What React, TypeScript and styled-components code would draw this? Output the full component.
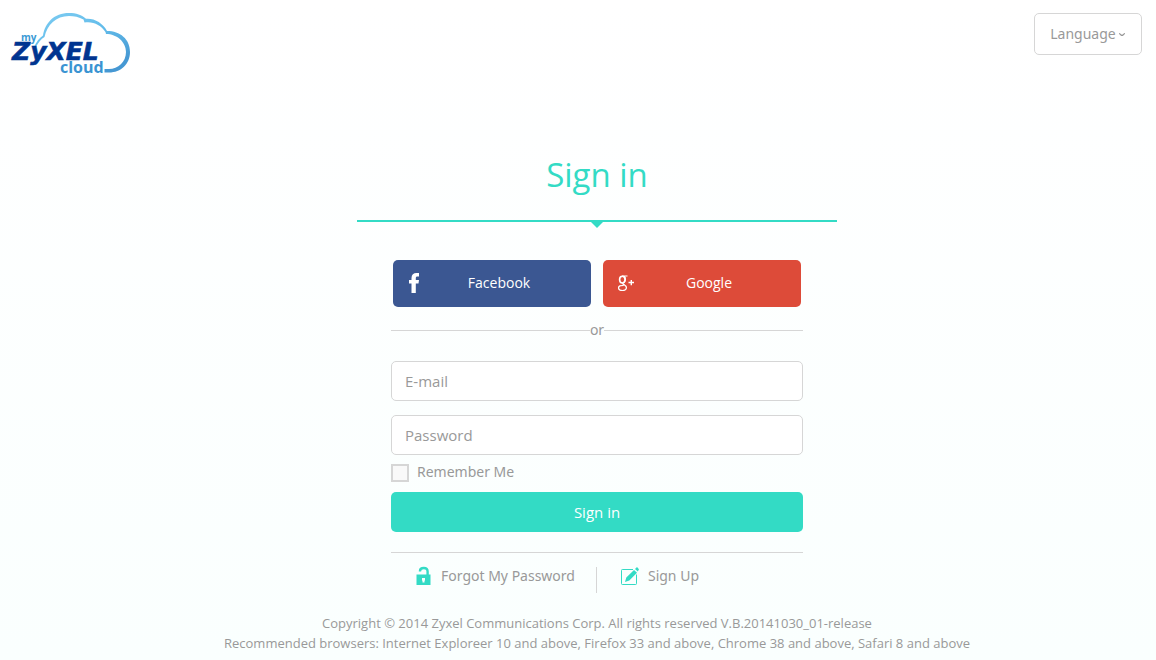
import React from 'react';
import styled, { createGlobalStyle } from 'styled-components';

const teal = '#33dbc5';
const grey = '#999';
const line = '#d6d6d6';

const GlobalStyle = createGlobalStyle`
  *, *::before, *::after { box-sizing: border-box; }
  html { min-height: 100%; background: linear-gradient(#fff, #fafffe); }
  body {
    margin: 0;
    color: ${grey};
    font-family: "Noto Sans", "Open Sans", sans-serif;
    font-size: 14px;
    line-height: 20px;
  }
  button, input { font: inherit; }
`;

const Header = styled.header`
  display: flex;
  justify-content: space-between;
  align-items: flex-start;
  padding: 12px 14px 0 10px;
`;

const HomeLink = styled.a`
  display: block;
  svg { display: block; }
`;

const LanguageButton = styled.button`
  display: flex;
  align-items: center;
  justify-content: center;
  gap: 2px;
  width: 108px;
  height: 42px;
  margin-top: 1px;
  padding: 0;
  color: ${grey};
  background: #fff;
  border: 1px solid ${line};
  border-radius: 5px;
  cursor: pointer;
`;

const Content = styled.div`
  display: flex;
  flex-direction: column;
  align-items: center;
  padding-left: 38px;
`;

const Panel = styled.main`
  display: flex;
  flex-direction: column;
  align-items: center;
  width: 100%;
  max-width: 480px;
  padding-top: 71px;
`;

const Title = styled.h1`
  width: 100%;
  margin: 0;
  padding-bottom: 21px;
  border-bottom: 2px solid ${teal};
  color: ${teal};
  font-family: "Open Sans", sans-serif;
  font-size: 33px;
  font-weight: 400;
  line-height: 48px;
  text-align: center;
`;

const Pointer = styled.div`
  border: 6px solid transparent;
  border-top-color: ${teal};
  border-bottom: 0;
`;

const Form = styled.form`
  display: flex;
  flex-direction: column;
  width: 100%;
  max-width: 412px;
  padding-top: 32px;
`;

const SocialRow = styled.div`
  display: flex;
  gap: 12px;
  padding: 0 2px;
`;

const SocialButton = styled.button<{ $color: string }>`
  display: flex;
  align-items: center;
  flex: 1;
  height: 47px;
  padding: 0 12px 1px;
  color: #fff;
  background: ${(p) => p.$color};
  border: 0;
  border-radius: 5px;
  font-family: "Open Sans", sans-serif;
  cursor: pointer;
`;

const SocialLabel = styled.span`
  flex: 1;
  padding-right: 6px;
  text-align: center;
`;

const Divider = styled.div`
  display: flex;
  align-items: center;
  height: 20px;
  margin: 13px 0 21px;
  &::before, &::after {
    content: '';
    flex: 1;
    height: 1px;
    background: ${line};
  }
`;

const Field = styled.input`
  width: 100%;
  height: 40px;
  margin-bottom: 14px;
  padding: 0 13px;
  color: #666;
  background: #fff;
  border: 1px solid ${line};
  border-radius: 5px;
  font-family: "Open Sans", sans-serif;
  font-size: 15px;
  &::placeholder { color: ${grey}; opacity: 1; }
`;

const Remember = styled.label`
  display: flex;
  align-items: center;
  gap: 8px;
  height: 20px;
  margin: -7px 0 10px;
`;

const CheckBox = styled.input`
  appearance: none;
  width: 18px;
  height: 18px;
  margin: 2px 0 0;
  background: #f9f9f9;
  border: 2px solid ${line};
  &:checked { background: ${teal}; }
`;

const SubmitButton = styled.button`
  height: 40px;
  padding: 0;
  color: #fff;
  background: ${teal};
  border: 0;
  border-radius: 5px;
  font-family: "Open Sans", sans-serif;
  font-size: 15px;
  cursor: pointer;
`;

const Links = styled.nav`
  display: flex;
  align-items: flex-start;
  margin-top: 20px;
  padding: 13px 0 0 24px;
  border-top: 1px solid ${line};
`;

const IconLink = styled.a`
  display: flex;
  align-items: center;
  gap: 9px;
  color: ${grey};
  text-decoration: none;
`;

const Separator = styled.span`
  width: 1px;
  height: 26px;
  margin: 1px 24px 0 21px;
  background: ${line};
`;

const Footer = styled.footer`
  padding: 20px 0 7px;
  font-family: "Open Sans", sans-serif;
  font-size: 13px;
  text-align: center;
  p { margin: 0; }
`;

const Logo = () => (
  <svg width="122" height="68" viewBox="10 12 122 68" role="img" aria-label="myZyXEL cloud">
    <defs>
      <linearGradient id="cloud" x1="0" y1="0" x2="0.6" y2="1">
        <stop offset="0" stopColor="#7fcdf2" />
        <stop offset="0.5" stopColor="#62bcea" />
        <stop offset="1" stopColor="#4598d3" />
      </linearGradient>
    </defs>
    <path
      d="M34 47C36.500 42 39 38 43 35.500C45 23 54 13 69 13C76 13 82 15 86 18.800C94 18 103 23 107 31C120 31 130 39 130 52C130 64 121 72.500 109 72.500L104.500 72.500L104.500 69L109 69C118 69 126 62 126 52C126 42 117 34 106 34L105.500 32C101 25 93 21 84.500 22.500L83.500 19.500C79 17 74 16 69 16C56 16 47 25 44.500 37C41 39 38 43 36 47Z"
      fill="url(#cloud)"
    />
    <text x="21" y="41" fontFamily='"Open Sans", sans-serif' fontWeight="700" fontSize="10" fill="#3a9ad5">my</text>
    <text
      x="12"
      y="60"
      fontFamily='"DejaVu Sans", sans-serif'
      fontWeight="700"
      fontStyle="italic"
      fontSize="25"
      fill="#003590"
      stroke="#003590"
      strokeWidth="0.6"
    >
      ZyXEL
    </text>
    <text x="60" y="73" fontFamily='"Open Sans", sans-serif' fontWeight="700" fontSize="16" fill="#3a94d2">cloud</text>
  </svg>
);

const Chevron = () => (
  <svg width="8" height="6" viewBox="0 0 8 6" fill="none" stroke="#999" strokeWidth="1.200" aria-hidden="true">
    <path d="M1 2.500C2 2.500 3 4.500 4 4.500C5 4.500 6 2.500 7 2.500" />
  </svg>
);

const FacebookIcon = () => (
  <svg width="20" height="22" viewBox="0 0 20 22" fill="#fff" aria-hidden="true">
    <path d="M6.500 21V11.500H4V8H6.500V6C6.500 2.600 8.500 1 11.500 1H14V4.500H12.500C11.200 4.500 10.800 5 10.800 6.200V8H14L13.500 11.500H10.800V21Z" />
  </svg>
);

const GoogleIcon = () => (
  <svg width="20" height="20" viewBox="0 0 20 20" fill="none" stroke="#fff" aria-hidden="true">
    <ellipse cx="7.300" cy="6.600" rx="2.700" ry="3.400" strokeWidth="1.600" />
    <path
      d="M7 3H12.500M9.300 3.400C10.800 5 11 8 8.700 9.500C6.500 10.900 8.300 11.200 9.800 12.200C12.600 14 11.700 17.500 7.500 17.500C2.500 17.500 2.700 13.400 5.600 12.700C6.500 12.400 7.500 12.300 8.600 12.300"
      strokeWidth="1.200"
    />
    <path d="M13.500 9.500H19M16.300 7V12.200" strokeWidth="1.400" />
  </svg>
);

const LockIcon = () => (
  <svg width="17" height="20" viewBox="0 0 17 20" aria-hidden="true">
    <path d="M5 5.500V5C5 2.800 6.700 2 8.800 2C11 2 12.600 3 12.600 5.500V9" fill="none" stroke={teal} strokeWidth="2.400" />
    <path fillRule="evenodd" fill={teal} d="M1.500 8.500H15.500V19H1.500ZM7 12V14.500L7.500 14.800V16.500H9.500V14.800L10 14.500V12Z" />
  </svg>
);

const SignUpIcon = () => (
  <svg width="18" height="20" viewBox="0 0 18 20" aria-hidden="true">
    <path d="M12 3.500H1.300C.8 3.500 .5 3.800 .5 4.300V17.700C.5 18.200 .8 18.500 1.300 18.500H14.700C15.200 18.500 15.500 18.200 15.500 17.700V8.500" fill="none" stroke={teal} />
    <path d="M4 16L5.300 11.600L13 4L16 6.700L8.300 14.500ZM14 3L16 1L18 3.300L16.800 5.600Z" fill={teal} />
  </svg>
);

export default function App() {
  return (
    <>
      <GlobalStyle />
      <Header>
        <HomeLink href="#"><Logo /></HomeLink>
        <LanguageButton type="button">Language<Chevron /></LanguageButton>
      </Header>
      <Content>
        <Panel>
          <Title>Sign in</Title>
          <Pointer />
          <Form onSubmit={(e) => e.preventDefault()}>
            <SocialRow>
              <SocialButton type="button" $color="#3b5792">
                <FacebookIcon /><SocialLabel>Facebook</SocialLabel>
              </SocialButton>
              <SocialButton type="button" $color="#dd4b39">
                <GoogleIcon /><SocialLabel>Google</SocialLabel>
              </SocialButton>
            </SocialRow>
            <Divider>or</Divider>
            <Field type="email" placeholder="E-mail" aria-label="E-mail" />
            <Field type="password" placeholder="Password" aria-label="Password" />
            <Remember><CheckBox type="checkbox" />Remember Me</Remember>
            <SubmitButton type="submit">Sign in</SubmitButton>
            <Links>
              <IconLink href="#forgot"><LockIcon />Forgot My Password</IconLink>
              <Separator />
              <IconLink href="#signup"><SignUpIcon />Sign Up</IconLink>
            </Links>
          </Form>
        </Panel>
        <Footer>
          <p>Copyright © 2014 Zyxel Communications Corp. All rights reserved V.B.20141030_01-release</p>
          <p>Recommended browsers: Internet Exploreer 10 and above, Firefox 33 and above, Chrome 38 and above, Safari 8 and above</p>
        </Footer>
      </Content>
    </>
  );
}
